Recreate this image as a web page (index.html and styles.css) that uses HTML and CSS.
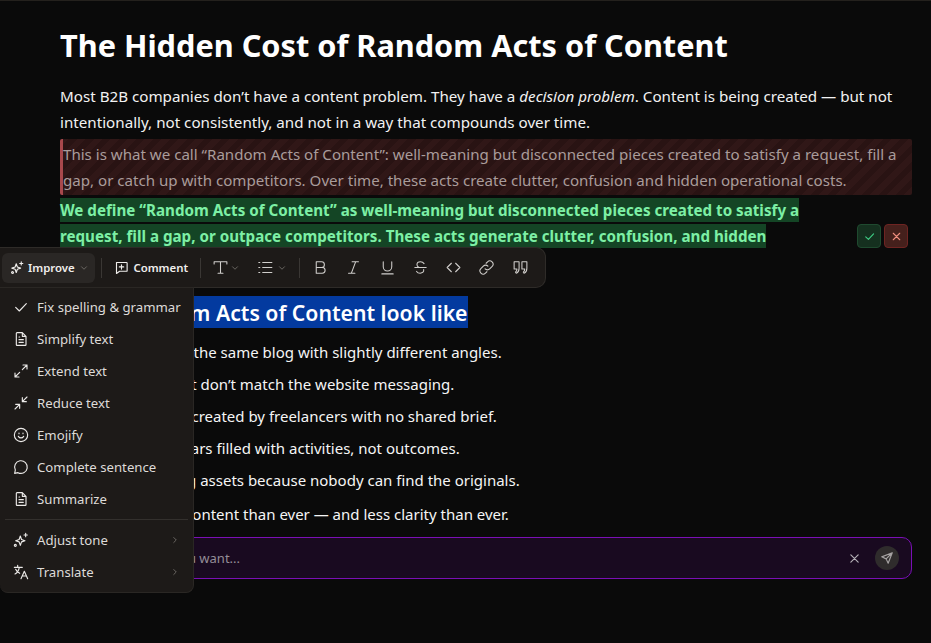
FILE: index.html
```html
<!DOCTYPE html>
<html lang="en">
  <head>
    <meta charset="UTF-8" />
    <title>The Hidden Cost of Random Acts of Content</title>
    <link rel="stylesheet" href="styles.css">
  </head>

  <body>
    <div class="doc">
      <h1>The Hidden Cost of Random Acts of Content</h1>
      <p class="para">Most B2B companies don’t have a content problem. They have a <em>decision problem</em>. Content is being created — but not intentionally, not consistently, and not in a way that compounds over time.</p>

      <p class="removed">This is what we call “Random Acts of Content”: well-meaning but disconnected pieces created to satisfy a request, fill a gap, or catch up with competitors. Over time, these acts create clutter, confusion and hidden operational costs.</p>

      <div class="added-row">
        <p class="added"><span>We define “Random Acts of Content” as well-meaning but disconnected pieces created to satisfy a request, fill a gap, or outpace competitors. These acts generate clutter, confusion, and hidden operational costs.</span></p>
      </div>

      <h2><span class="selected">What Random Acts of Content look like</span></h2>

      <ul class="list">
        <li>Two articles on the same blog with slightly different angles.</li>
        <li>Sales decks that don’t match the website messaging.</li>
        <li>Landing pages created by freelancers with no shared brief.</li>
        <li>Content calendars filled with activities, not outcomes.</li>
        <li>Sales rebuilding assets because nobody can find the originals.</li>
        <li class="last">We own more content than ever — and less clarity than ever.</li>
      </ul>

      <div class="ask-bar">
        <span class="ask-text">Tell AI what you want...</span>
        <svg class="ask-close" viewBox="0 0 24 24"><path d="M4 4l16 16M20 4L4 20"/></svg>
        <div class="ask-send">
          <svg viewBox="0 0 24 24"><path d="M21 3L3 10l7.500 3.500L14 21 21 3zM10.500 13.500L21 3"/></svg>
        </div>
      </div>
    </div>

    <div class="diff-btns">
      <div class="diff-btn ok"><svg viewBox="0 0 24 24"><path d="M5 12.500l5 5L19.500 7"/></svg></div>
      <div class="diff-btn no"><svg viewBox="0 0 24 24"><path d="M6 6l12 12M18 6L6 18"/></svg></div>
    </div>

    <div class="toolbar">
      <div class="tool improve">
        <svg class="ico" viewBox="0 0 24 24"><path d="M10 6l1.800 5.200L17 13l-5.200 1.800L10 20l-1.800-5.200L3 13l5.200-1.800L10 6zM18 3v5M15.500 5.500h5"/><circle cx="4" cy="20" r="1.500"/></svg>
        <span>Improve</span>
        <svg class="chev" viewBox="0 0 24 24"><path d="M6 9l6 6 6-6"/></svg>
      </div>
      <div class="sep sep-a"></div>
      <div class="tool comment">
        <svg class="ico" viewBox="0 0 24 24"><path d="M4 4h16a1 1 0 0 1 1 1v12a1 1 0 0 1-1 1H9l-5 3.500V5a1 1 0 0 1 0-1zM12 7.500v7M8.500 11h7"/></svg>
        <span>Comment</span>
      </div>
      <div class="sep sep-b"></div>
      <div class="tool plain type">
        <svg class="ico big" viewBox="0 0 24 24"><path d="M3 7V4h18v3M12 4v16M8.500 20h7"/></svg>
        <svg class="chev" viewBox="0 0 24 24"><path d="M6 9l6 6 6-6"/></svg>
      </div>
      <div class="tool plain">
        <svg class="ico big" viewBox="0 0 24 24"><path d="M8 5h13M8 12h13M8 19h13M2.500 5h1.500M2.500 12h1.500M2.500 19h1.500"/></svg>
        <svg class="chev" viewBox="0 0 24 24"><path d="M6 9l6 6 6-6"/></svg>
      </div>
      <div class="sep sep-c"></div>
      <div class="tool mark"><svg class="ico big" viewBox="0 0 24 24"><path d="M6 4h7.500a4 4 0 0 1 0 8H6zM6 12h8.500a4 4 0 0 1 0 8H6z"/></svg></div>
      <div class="tool mark"><svg class="ico big" viewBox="0 0 24 24"><path d="M10 4h9M5 20h9M15 4L9 20"/></svg></div>
      <div class="tool mark"><svg class="ico big" viewBox="0 0 24 24"><path d="M6 4v7a6 6 0 0 0 12 0V4M4 21h16"/></svg></div>
      <div class="tool mark"><svg class="ico big" viewBox="0 0 24 24"><path d="M17 6.500C16 5 14.500 4 12 4c-3 0-5 1.500-5 4 0 1.500.8 2.800 3 4M4 12h16M16.500 15c.5 3-1.500 5-5 5-2.500 0-4-.8-5-2.500"/></svg></div>
      <div class="tool mark"><svg class="ico big" viewBox="0 0 24 24"><path d="M9 6l-6 6 6 6M15 6l6 6-6 6"/></svg></div>
      <div class="tool mark"><svg class="ico big" viewBox="0 0 24 24"><path d="M10 14a4.500 4.500 0 0 0 6.500 0l3.500-3.500a4.600 4.600 0 0 0-6.500-6.500l-2 2M14 10a4.500 4.500 0 0 0-6.500 0L4 13.500a4.600 4.600 0 0 0 6.500 6.500l2-2"/></svg></div>
      <div class="tool mark"><svg class="ico big" viewBox="0 0 24 24"><path d="M3 4h7v9c0 3.500-1.500 6-4 7l-1-1.500c1.300-1 2-2.500 2-4.500H3zM14 4h7v9c0 3.500-1.500 6-4 7l-1-1.500c1.300-1 2-2.500 2-4.500h-4z"/></svg></div>
    </div>

    <div class="menu">
      <div class="menu-item">
        <svg class="ico" viewBox="0 0 24 24"><path d="M4 12.500l5.500 5.500L20 7"/></svg>
        <span>Fix spelling &amp; grammar</span>
      </div>
      <div class="menu-item">
        <svg class="ico" viewBox="0 0 24 24"><path d="M6 2.500h8l5.500 5.500v12.500a1 1 0 0 1-1 1H6a1 1 0 0 1-1-1v-17a1 1 0 0 1 1-1zM14 2.500V8h5.500M9 13h6.500M9 17h6.500M9 9h1"/></svg>
        <span>Simplify text</span>
      </div>
      <div class="menu-item">
        <svg class="ico" viewBox="0 0 24 24"><path d="M14 10l7-7M15 3h6v6M10 14l-7 7M3 15v6h6"/></svg>
        <span>Extend text</span>
      </div>
      <div class="menu-item">
        <svg class="ico" viewBox="0 0 24 24"><path d="M14 10l7-7M14 4v6h6M10 14l-7 7M4 14h6v6"/></svg>
        <span>Reduce text</span>
      </div>
      <div class="menu-item">
        <svg class="ico" viewBox="0 0 24 24"><circle cx="12" cy="12" r="10"/><path d="M8 14c1 1.600 2.300 2.400 4 2.400s3-.8 4-2.400M9 9v1M15 9v1"/></svg>
        <span>Emojify</span>
      </div>
      <div class="menu-item">
        <svg class="ico" viewBox="0 0 24 24"><path d="M7.500 20.500A9.500 9.500 0 1 0 3.500 16.500L2.500 21.500z"/></svg>
        <span>Complete sentence</span>
      </div>
      <div class="menu-item">
        <svg class="ico" viewBox="0 0 24 24"><path d="M6 2.500h8l5.500 5.500v12.500a1 1 0 0 1-1 1H6a1 1 0 0 1-1-1v-17a1 1 0 0 1 1-1zM14 2.500V8h5.500M9 13h6.500M9 17h6.500M9 9h1"/></svg>
        <span>Summarize</span>
      </div>
      <div class="menu-line"></div>
      <div class="menu-item">
        <svg class="ico" viewBox="0 0 24 24"><path d="M11 6l1.800 5.200L18 13l-5.200 1.800L11 20l-1.800-5.200L4 13l5.200-1.800L11 6zM19 2v5M16.500 4.500h5"/><circle cx="3.500" cy="20" r="1.500"/></svg>
        <span>Adjust tone</span>
        <svg class="arrow" viewBox="0 0 24 24"><path d="M9 6l6 6-6 6"/></svg>
      </div>
      <div class="menu-item">
        <svg class="ico" viewBox="0 0 24 24"><path d="M2 5h12M7 2v3M3 15c3-1.500 5.500-5 6.500-10M4 8c1 2.500 3 4.500 6 6M12 22l5-11 5 11M14 18h6"/></svg>
        <span>Translate</span>
        <svg class="arrow" viewBox="0 0 24 24"><path d="M9 6l6 6-6 6"/></svg>
      </div>
    </div>
  </body>
</html>
```

FILE: styles.css
```css
* {
  box-sizing: border-box;
}

html,
body {
  height: 100%;
}

body {
  margin: 0;
  background-color: #0a0a0a;
  border-top: 1px solid #24211d;
  color: #fff;
  font-family: "Noto Sans", sans-serif;
  overflow: hidden;
  position: relative;
}

svg {
  fill: none;
  stroke: currentColor;
  stroke-width: 2;
  stroke-linecap: round;
  stroke-linejoin: round;
  flex-shrink: 0;
}

/* document */

.doc {
  padding: 25px 19px 0 60px;
  position: relative;
}

h1 {
  margin: 0 0 19px;
  font-size: 30.7px;
  line-height: 38px;
  font-weight: 700;
}

.para {
  margin: 0 0 4px;
  font-size: 15.18px;
  line-height: 26px;
  color: #f2f2f2;
}

.removed {
  margin: 0 0 2px;
  padding: 2px 10px 2px 0;
  font-size: 15.1px;
  line-height: 26px;
  color: #a99c9b;
  border-left: 3px solid #a8484c;
  border-radius: 2px;
  background: repeating-linear-gradient(-45deg, #301717 0 6px, #291313 6px 12px);
}

.added-row {
  height: 104px;
}

.added {
  margin: 0;
  width: 760px;
  font-size: 15.18px;
  line-height: 26px;
  font-weight: 700;
  color: #7df0a5;
}

.added span {
  background-color: #144525;
  padding: 2px 0;
}

h2 {
  margin: -5px 0 0;
  font-size: 21.2px;
  line-height: 31px;
  font-weight: 600;
}

.selected {
  background-color: #033a9f;
  display: inline-block;
  padding: 1px 0 0 4px;
}

.list {
  list-style: none;
  margin: 8px 0 0;
  padding: 0 0 0 24px;
  font-size: 15px;
  line-height: 32px;
  color: #f5f5f5;
}

.last {
  margin-top: 2px;
}

.ask-bar {
  margin-top: 7px;
  height: 42px;
  padding: 0 12px 0 39px;
  display: flex;
  align-items: center;
  background-color: #190a20;
  border: 1px solid #7a0fb5;
  border-radius: 10px;
}

.ask-text {
  flex: 1;
  font-size: 13px;
  color: #948d97;
}

.ask-close {
  width: 11px;
  height: 11px;
  margin-right: 15px;
  stroke-width: 2.500;
  color: #b5b1b7;
}

.ask-send {
  width: 24px;
  height: 24px;
  border-radius: 50%;
  background-color: #2f2c2c;
  display: flex;
  align-items: center;
  justify-content: center;
  color: #a5a2a2;
}

.ask-send svg {
  width: 14px;
  height: 14px;
}

/* accept / reject */

.diff-btns {
  position: absolute;
  left: 857px;
  top: 223px;
  display: flex;
  gap: 3px;
}

.diff-btn {
  width: 24px;
  height: 24px;
  border-radius: 4px;
  display: flex;
  align-items: center;
  justify-content: center;
}

.diff-btn svg {
  width: 13px;
  height: 13px;
}

.diff-btn.ok {
  background-color: #15301f;
  border: 1px solid #1f4a2f;
  color: #3fcf85;
}

.diff-btn.no {
  background-color: #45201c;
  border: 1px solid #6e2422;
  color: #ef8d7e;
}

/* floating toolbar */

.toolbar {
  position: absolute;
  left: 0;
  top: 246px;
  width: 546px;
  height: 41px;
  background-color: #1d1a18;
  border: 1px solid #2e2b28;
  border-left: 0;
  border-radius: 0 10px 10px 0;
  display: flex;
  align-items: center;
  padding-left: 2px;
  font-size: 11.4px;
  font-weight: 600;
  color: #f0eeec;
}

.tool {
  display: flex;
  align-items: center;
  height: 30px;
}

.improve {
  width: 95px;
  padding-left: 8px;
  gap: 3px;
  background-color: #2a2725;
  border-radius: 6px;
}

.improve .chev {
  margin-left: 1px;
}

.comment {
  gap: 4px;
}

.toolbar .ico {
  width: 15px;
  height: 15px;
  stroke-width: 1.800;
}

.toolbar .ico.big {
  width: 17px;
  height: 17px;
  stroke-width: 1.500;
  color: #d0cecb;
}

.chev {
  width: 10px;
  height: 10px;
  margin-left: 3px;
  color: #77736f;
}

.sep {
  width: 1px;
  height: 20px;
  background-color: #3a3734;
}

.sep-a {
  margin: 0 12px 0 6px;
}

.sep-b {
  margin: 0 11px 0 12px;
}

.plain {
  margin-right: 13px;
}

.type {
  margin-right: 17px;
}

.type .chev {
  margin-left: 1px;
}

.sep-c {
  margin: 0 12px 0 -1px;
}

.mark {
  width: 33.9px;
}

/* dropdown */

.menu {
  position: absolute;
  left: 0;
  top: 286px;
  width: 194px;
  height: 306px;
  padding: 3px 5px;
  background-color: #1d1a18;
  border: 1px solid #2a2724;
  border-left: 0;
  border-radius: 0 0 8px 8px;
  font-size: 13.2px;
  color: #dedbd8;
}

.menu-item {
  display: flex;
  align-items: center;
  height: 32px;
  padding-left: 8px;
  gap: 8px;
}

.menu-item .ico {
  width: 16px;
  height: 16px;
  stroke-width: 1.700;
  color: #eceae8;
}

.menu-item span {
  flex: 1;
  white-space: nowrap;
}

.arrow {
  width: 10px;
  height: 10px;
  margin-right: 8px;
  color: #77736f;
}

.menu-line {
  height: 1px;
  margin: 4px 0;
  background-color: #33302d;
}
```
